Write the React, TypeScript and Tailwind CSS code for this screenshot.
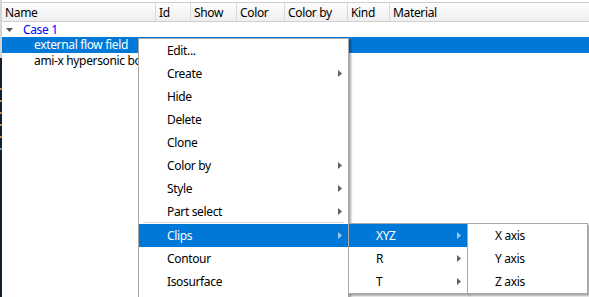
import React from "react";

const columns = [
  { label: "Name", w: "w-[154px]" },
  { label: "Id", w: "w-[35px]" },
  { label: "Show", w: "w-[46px]" },
  { label: "Color", w: "w-[48px]" },
  { label: "Color by", w: "w-[63px]" },
  { label: "Kind", w: "w-[42px]" },
  { label: "Material", w: "flex-1" },
];

const mainItems = [
  { label: "Edit...", sub: false },
  { label: "Create", sub: true },
  { label: "Hide", sub: false },
  { label: "Delete", sub: false },
  { label: "Clone", sub: false },
  { label: "Color by", sub: true },
  { label: "Style", sub: true },
];

function Arrow({ light }: { light?: boolean }) {
  return (
    <svg width="4" height="7" viewBox="0 0 4 7" className="shrink-0">
      <path d="M0 0 L4 3.5 L0 7 Z" fill={light ? "#9cc9f0" : "#606060"} />
    </svg>
  );
}

function MenuItem({
  label,
  sub,
  active,
  pl = "pl-[28px]",
  h = "h-[23px]",
  pr = "pr-[6px]",
}: {
  label: string;
  sub?: boolean;
  active?: boolean;
  pl?: string;
  h?: string;
  pr?: string;
}) {
  return (
    <div
      className={`flex items-center justify-between ${h} ${pl} ${pr} ${
        active ? "bg-[#0078d7] text-white" : "text-black"
      }`}
    >
      <span className="pt-[1px]">{label}</span>
      {sub && <Arrow light={active} />}
    </div>
  );
}

export default function App() {
  return (
    <div
      className="relative w-[589px] h-[297px] overflow-hidden bg-white text-[12px] leading-none tracking-[-0.35px] flex"
      style={{ fontFamily: '"Noto Sans", "Liberation Sans", sans-serif' }}
    >
      {/* window edge behind the tree */}
      <div className="w-[2px] flex flex-col shrink-0">
        <div className="h-[58px] bg-[#d4d4d4]" />
        <div className="flex-1 bg-[#15202e] flex flex-col gap-[10px] pt-[30px]">
          <div className="h-[2px] bg-[#c98b3a]" />
          <div className="h-[2px] bg-[#c98b3a]" />
          <div className="h-[2px] bg-[#c98b3a]" />
          <div className="h-[2px] bg-[#c98b3a]" />
          <div className="h-[2px] bg-[#c98b3a]" />
          <div className="h-[2px] bg-[#5a8fd0]" />
        </div>
      </div>

      <div className="flex-1 flex flex-col">
        {/* header */}
        <div className="mt-[2px] flex h-[20px] border-t border-b border-[#cfcfcf] bg-gradient-to-b from-[#fdfdfd] to-[#efefef]">
          {columns.map((c, i) => (
            <div
              key={c.label}
              className={`${c.w} flex items-center pl-[3px] pt-[1px] text-black ${
                i < columns.length - 1 ? "border-r border-[#dadada]" : ""
              }`}
            >
              {c.label}
            </div>
          ))}
        </div>

        {/* tree rows */}
        <div className="flex items-center h-[15px]">
          <svg width="7" height="4" viewBox="0 0 7 4" className="ml-[4px] mr-[10px]">
            <path d="M0 0 L7 0 L3.5 4 Z" fill="#555" />
          </svg>
          <span className="text-[#0000ff]">Case 1</span>
        </div>
        <div className="flex items-center h-[16px] bg-[#0078d7] text-white pl-[32px]">
          external flow field
        </div>
        <div className="flex items-center h-[16px] text-black pl-[32px]">
          ami-x hypersonic body
        </div>
      </div>

      {/* context menu */}
      <div className="absolute left-[138px] top-[38px] w-[211px] h-[275px] bg-white border border-[#a8a8a8] shadow-[2px_2px_2px_rgba(0,0,0,0.35)]">
        {mainItems.map((it) => (
          <MenuItem key={it.label} label={it.label} sub={it.sub} />
        ))}
        <MenuItem label="Part select" sub h="h-[22px]" />
        <div className="mx-[4px] h-[1px] bg-[#d7d7d7]" />
        <div className="h-[1px]" />
        <MenuItem label="Clips" sub active />
        <MenuItem label="Contour" />
        <MenuItem label="Isosurface" />
      </div>

      {/* clips submenu */}
      <div className="absolute left-[348px] top-[223px] w-[120px] bg-white border border-[#a8a8a8] shadow-[2px_2px_2px_rgba(0,0,0,0.35)]">
        <MenuItem label="XYZ" sub active pl="pl-[27px]" />
        <MenuItem label="R" sub pl="pl-[27px]" />
        <MenuItem label="T" sub pl="pl-[27px]" />
      </div>

      {/* xyz submenu */}
      <div className="absolute left-[467px] top-[223px] w-[121px] bg-white border border-[#a8a8a8] shadow-[2px_2px_2px_rgba(0,0,0,0.35)]">
        <MenuItem label="X axis" pl="pl-[27px]" />
        <MenuItem label="Y axis" pl="pl-[27px]" />
        <MenuItem label="Z axis" pl="pl-[27px]" />
      </div>
    </div>
  );
}
